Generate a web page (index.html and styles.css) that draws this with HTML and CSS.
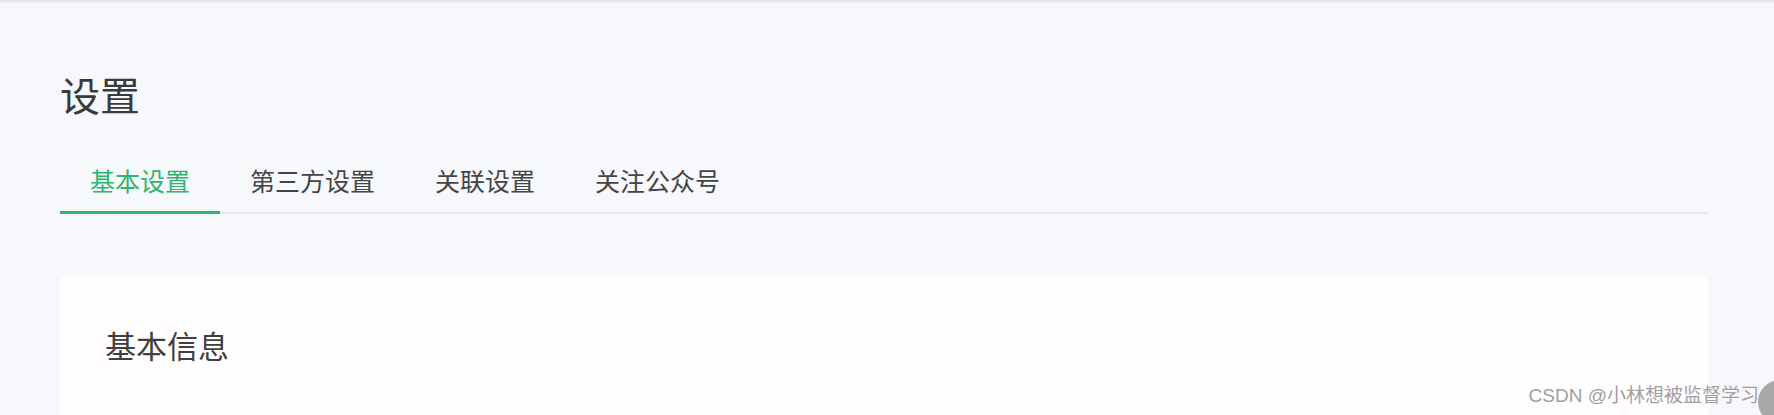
FILE: index.html
```html
<!DOCTYPE html>
<html lang="zh-CN">
<head>
<meta charset="utf-8">
<title>设置</title>
<link rel="stylesheet" href="styles.css">
</head>
<body>
<div class="topline"></div>
<main class="page">
  <h1 class="page-title">设置</h1>
  <nav class="tabs">
    <a class="tab active">基本设置</a>
    <a class="tab">第三方设置</a>
    <a class="tab">关联设置</a>
    <a class="tab">关注公众号</a>
  </nav>
  <section class="card">
    <h2 class="card-title">基本信息</h2>
  </section>
</main>
<div class="watermark">CSDN @小林想被监督学习</div>
<div class="fab"></div>
</body>
</html>
```
FILE: styles.css
```css
html, body {
  margin: 0;
  padding: 0;
  height: 100%;
  overflow: hidden;
}
body {
  background: #f7f8fb;
  font-family: "Noto Sans CJK SC", "Noto Sans", sans-serif;
  position: relative;
}
.topline {
  height: 3px;
  background: linear-gradient(#e6e3e5, #efedf0);
}
.page {
  width: 1648px;
  margin-left: 60px;
  padding-top: 71px;
}
.page-title {
  margin: 0;
  font-size: 40px;
  line-height: 40px;
  font-weight: 400;
  color: #3a3a3a;
}
.tabs {
  display: flex;
  margin-top: 54px;
  border-bottom: 2px solid #e6e8ee;
}
.tab {
  padding: 0 30px;
  height: 43px;
  font-size: 25px;
  line-height: 25px;
  color: #444444;
  margin-bottom: -2px;
  border-bottom: 3px solid transparent;
  box-sizing: content-box;
}
.tab.active {
  color: #2eb56e;
  border-bottom-color: #2eb56e;
}
.card {
  margin-top: 62px;
  background: #fffdfe;
  border-radius: 6px 6px 0 0;
  height: 139px;
  padding: 53px 45px 0;
  box-sizing: border-box;
}
.card-title {
  margin: 0;
  font-size: 31px;
  line-height: 31px;
  font-weight: 400;
  color: #404040;
}
.watermark {
  position: absolute;
  right: 15px;
  top: 385px;
  font-family: "Liberation Sans", "Noto Sans CJK SC", sans-serif;
  font-size: 19px;
  line-height: 22px;
  color: #a0a0a0;
  text-shadow: 0 0 1px #ffffff;
}
.fab {
  position: absolute;
  left: 1758px;
  top: 380px;
  width: 44px;
  height: 44px;
  border-radius: 50%;
  background: #a9a9a9;
}
```
